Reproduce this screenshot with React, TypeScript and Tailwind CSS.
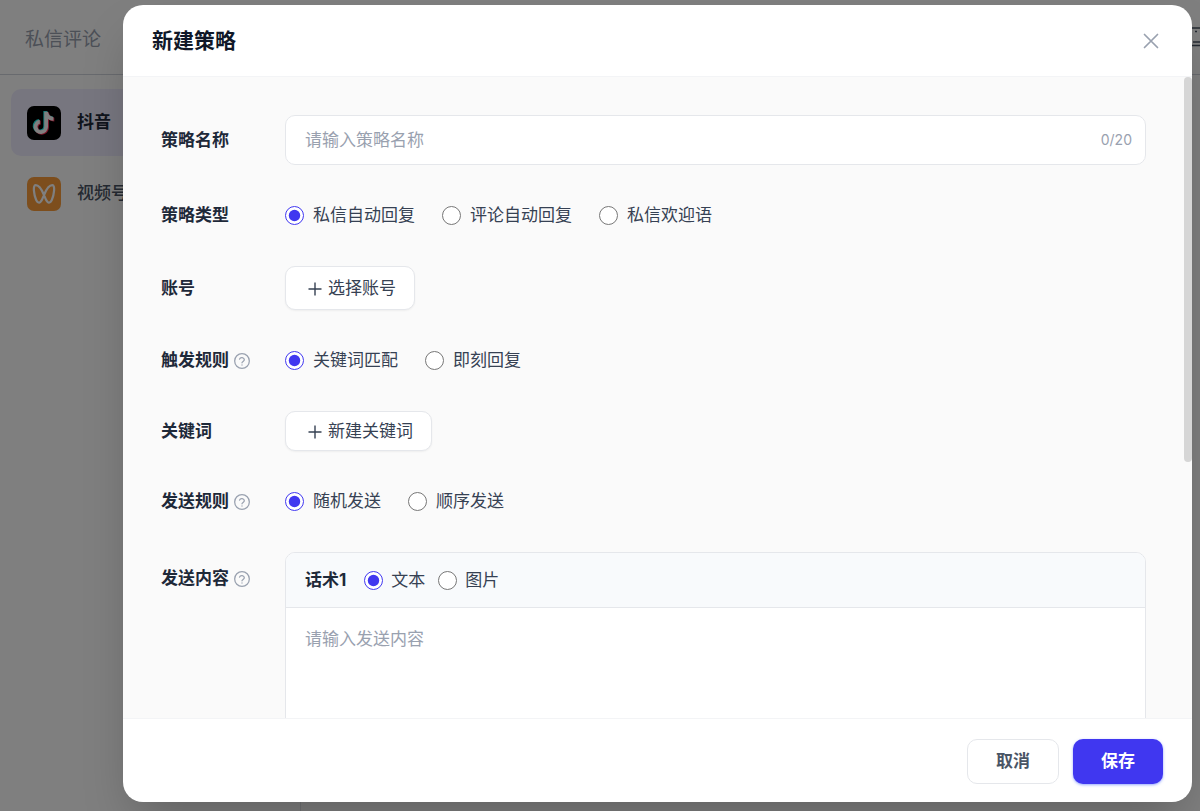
import { useState } from "react";
import type { ReactNode } from "react";

function DouyinLogo() {
  const note =
    "M16.400 4.500h4.200c.4 3.500 2.500 5.600 6 5.900v4.200c-2.300 0-4.300-.7-6-1.900v8.600a8 8 0 1 1-9.100-7.900v4.400a3.750 3.750 0 1 0 4.900 3.500z";
  return (
    <svg viewBox="0 0 34 34" className="size-[34px] shrink-0" aria-hidden="true">
      <rect width="34" height="34" rx="7" fill="#000" />
      <g transform="translate(2.300 1.300) scale(0.900)">
        <path d={note} fill="#25f4ee" transform="translate(-0.800 -0.500)" />
        <path d={note} fill="#fe2c55" transform="translate(1.200 1.200)" />
        <path d={note} fill="#fff" transform="translate(0.200 0.400)" />
      </g>
    </svg>
  );
}

function ChannelsLogo() {
  return (
    <svg viewBox="0 0 34 34" className="size-[34px] shrink-0" aria-hidden="true">
      <rect width="34" height="34" rx="7" fill="#fa9d3b" />
      <path
        d="M17 18C15 13.200 11.600 8.200 8.700 8.200c-3.200 0-1.700 9.800.4 14.500 1.200 2.700 2.800 3.700 4.300 2.300C15 23.500 16 20.500 17 18c2-4.800 5.400-9.800 8.300-9.800 3.200 0 1.700 9.800-.4 14.500-1.200 2.700-2.800 3.700-4.300 2.300C19 23.500 18 20.500 17 18z"
        fill="none"
        stroke="#fff"
        strokeWidth="2.200"
        strokeLinejoin="round"
      />
    </svg>
  );
}

function HelpIcon() {
  return (
    <svg viewBox="0 0 24 24" className="size-4 shrink-0 text-gray-400" fill="none" stroke="currentColor" strokeWidth="1.900" strokeLinecap="round" strokeLinejoin="round" aria-hidden="true">
      <circle cx="12" cy="12" r="11" />
      <path d="M8.300 9.200a3.700 3.500 0 0 1 7.200 1c0 2.200-3.500 2.600-3.500 4.500M12 18v.1" />
    </svg>
  );
}

function PlusIcon() {
  return (
    <svg viewBox="0 0 14 14" className="size-[14px]" fill="none" stroke="currentColor" strokeWidth="1.400" aria-hidden="true">
      <path d="M7 .5v13M.5 7h13" />
    </svg>
  );
}

function Row({ label, help, top, htmlFor, children }: { label: string; help?: boolean; top?: boolean; htmlFor?: string; children: ReactNode }) {
  const text = "text-[17px] leading-[25px] font-bold text-gray-800";
  return (
    <div className={top ? "flex items-start" : "flex items-center"}>
      <div className={`flex w-[124px] shrink-0 items-center gap-[5px] ${top ? "pt-[14px]" : ""}`}>
        {htmlFor ? <label htmlFor={htmlFor} className={text}>{label}</label> : <span className={text}>{label}</span>}
        {help && <HelpIcon />}
      </div>
      <div className="min-w-0 flex-1">{children}</div>
    </div>
  );
}

function Radios({ name, options, compact }: { name: string; options: string[]; compact?: boolean }) {
  const [value, setValue] = useState(options[0]);
  return (
    <div role="radiogroup" aria-label={name} className={compact ? "flex gap-[13px]" : "flex gap-[27px]"}>
      {options.map((o) => (
        <label key={o} className={`flex items-center text-[17px] leading-[25px] text-gray-700 ${compact ? "gap-2" : "gap-[9px]"}`}>
          <input type="radio" name={name} checked={value === o} onChange={() => setValue(o)} className="size-[19px] accent-[#4037f0]" />
          {o}
        </label>
      ))}
    </div>
  );
}

const outline = "flex items-center gap-[6px] rounded-[10px] border border-gray-200 bg-white pt-px pr-[18px] pl-[22px] text-[17px] text-gray-700 shadow-xs";

export default function App() {
  const [title, setTitle] = useState("");
  return (
    <div className="relative h-screen overflow-hidden bg-white font-['Inter','Noto_Sans_CJK_SC',sans-serif]">
      <div className="flex h-full flex-col">
        <header className="flex h-[75px] shrink-0 items-center justify-between border-b border-gray-300 pt-[7px] pl-[25px]">
          <h1 className="text-[19px] text-gray-400">私信评论</h1>
          <svg viewBox="0 0 24 20" className="-mr-3 mb-[7px] h-5 w-6 text-gray-600" fill="none" stroke="currentColor" strokeWidth="1.500" aria-hidden="true">
            <rect x="1" y="1" width="22" height="17.500" rx="3" />
            <path d="M7 4.500h2M5 15h14" />
          </svg>
        </header>
        <div className="flex min-h-0 flex-1">
          <nav className="flex w-[301px] flex-col gap-1 border-r border-gray-200 px-[11px] pt-[14px]">
            <a href="#douyin" className="flex h-[67px] items-center gap-4 rounded-[10px] bg-[#efedff] px-4 text-[17px] font-bold text-gray-800">
              <DouyinLogo />抖音
            </a>
            <a href="#channels" className="flex h-[67px] items-center gap-4 rounded-[10px] px-4 text-[17px] font-medium text-gray-600">
              <ChannelsLogo />视频号
            </a>
          </nav>
        </div>
      </div>

      <div className="absolute inset-0 flex bg-black/50 pt-[5px] pr-2 pb-[9px] pl-[123px]">
        <div role="dialog" aria-modal="true" aria-labelledby="dialog-title" className="flex min-w-0 flex-1 flex-col overflow-hidden rounded-[20px] bg-white shadow-2xl">
          <div className="flex h-[72px] shrink-0 items-center justify-between border-b border-gray-100 px-[29px]">
            <h2 id="dialog-title" className="text-[21px] font-bold text-gray-900">新建策略</h2>
            <button type="button" aria-label="关闭" className="p-1 text-gray-400">
              <svg viewBox="0 0 16 16" className="size-4" fill="none" stroke="currentColor" strokeWidth="1.700" strokeLinecap="round" aria-hidden="true">
                <path d="M1.500 1.500l13 13M14.500 1.500l-13 13" />
              </svg>
            </button>
          </div>

          <div className="relative min-h-0 flex-1 bg-[#fafafa]">
            <form id="strategy" className="flex h-full flex-col gap-[38px] overflow-y-auto py-[38px] pr-[46px] pl-[38px] [scrollbar-width:none]">
              <Row label="策略名称" htmlFor="title">
                <div className="flex h-[50px] items-center rounded-[10px] border border-gray-200 bg-white pr-[13px] pl-[19px]">
                  <input id="title" maxLength={20} value={title} onChange={(e) => setTitle(e.target.value)} placeholder="请输入策略名称" className="min-w-0 flex-1 text-[17px] leading-[25px] text-gray-700 outline-none placeholder:text-gray-400" />
                  <span className="text-sm text-gray-400">{title.length}/20</span>
                </div>
              </Row>
              <Row label="策略类型"><Radios name="策略类型" options={["私信自动回复", "评论自动回复", "私信欢迎语"]} /></Row>
              <Row label="账号"><button type="button" className={`${outline} h-11`}><PlusIcon />选择账号</button></Row>
              <Row label="触发规则" help><Radios name="触发规则" options={["关键词匹配", "即刻回复"]} /></Row>
              <Row label="关键词"><button type="button" className={`${outline} h-10`}><PlusIcon />新建关键词</button></Row>
              <Row label="发送规则" help><Radios name="发送规则" options={["随机发送", "顺序发送"]} /></Row>
              <Row label="发送内容" help top htmlFor="content">
                <div className="overflow-hidden rounded-[10px] border border-gray-200 bg-white">
                  <div className="flex h-[55px] items-center gap-[18px] border-b border-gray-200 bg-[#f8fafc] px-[19px]">
                    <span className="text-[17px] leading-[25px] font-bold text-gray-800">话术1</span>
                    <Radios compact name="话术1" options={["文本", "图片"]} />
                  </div>
                  <textarea id="content" placeholder="请输入发送内容" className="block h-[240px] w-full resize-none px-[19px] py-[19px] text-[17px] leading-[25px] text-gray-700 outline-none placeholder:text-gray-400" />
                </div>
              </Row>
            </form>
            <div className="absolute top-0 right-0 h-3/5 w-2 rounded-full bg-[#d6d6d6]" />
          </div>

          <div className="flex h-[84px] shrink-0 items-center justify-end gap-[14px] border-t border-gray-100 px-[29px] pt-px">
            <button type="button" className="h-[45px] rounded-[10px] border border-gray-200 bg-white px-7 pt-px text-[17px] font-bold text-gray-600">取消</button>
            <button type="submit" form="strategy" className="h-[45px] rounded-[10px] bg-[#4037f0] px-7 pt-px text-[17px] font-bold text-white shadow-sm shadow-indigo-300">保存</button>
          </div>
        </div>
      </div>
    </div>
  );
}
